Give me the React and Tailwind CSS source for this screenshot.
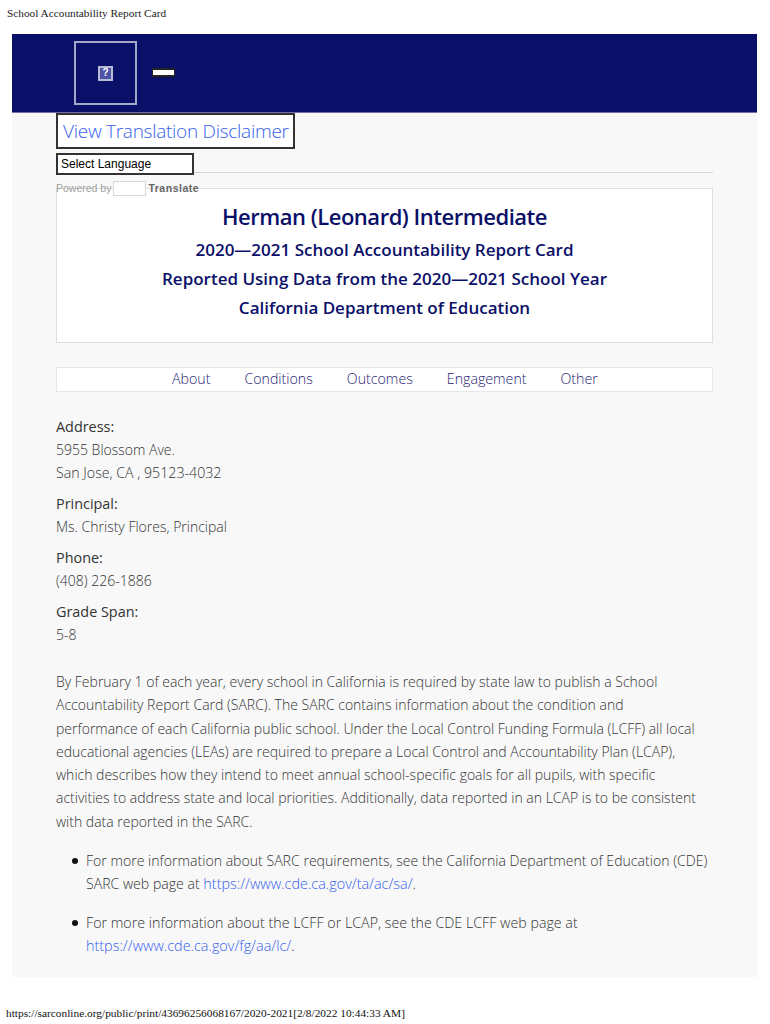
import React from 'react';

const OPEN = "font-['Open_Sans',sans-serif]";

export default function App() {
  return (
    <div className="w-[770px] h-[1024px] bg-white overflow-hidden flex flex-col">
      {/* print header */}
      <div className="h-[34px] pl-[7px] pt-[5px] font-['Liberation_Serif',serif] text-[11.3px] leading-[16px] text-[#222]">
        School Accountability Report Card
      </div>

      <div className={`ml-[12px] w-[745px] h-[943px] bg-[#f8f8f9] ${OPEN} font-light text-[#333]`}>
        {/* navy banner */}
        <div className="h-[79px] bg-[#0a0f68] border-b border-[#6f72a8] pl-[62px] pt-[7px] flex items-start">
          <div className="w-[63px] h-[64px] border-2 border-[#a5a7c6] flex items-center justify-center">
            <div className="w-[15px] h-[15px] bg-[#4d54a8] border-2 border-[#b9bbd6] flex items-center justify-center font-['Liberation_Sans',sans-serif] font-bold text-[10px] leading-none text-white">
              ?
            </div>
          </div>
          <div className="ml-[15px] mt-[27px] w-[23px] h-[9px] bg-white border-x border-y-2 border-[#222]" />
        </div>

        <div className="pl-[44px] pr-[44px]">
          <div className="w-[239px] h-[36px] bg-white border-2 border-[#333] flex items-center pl-[5px] text-[19px] tracking-[-0.27px] leading-none text-[#3560ee] whitespace-nowrap">
            View Translation Disclaimer
          </div>

          <div className="relative z-10 mt-[4px] w-[138px] h-[22px] bg-white border-2 border-[#333] flex items-center pl-[3px] font-['Liberation_Sans',sans-serif] font-normal text-[12px] text-black">
            Select Language
          </div>

          {/* powered by line over the title card */}
          <div className="h-[1px] -mt-[3px] bg-[#d6d6d8]" />
          <div className="relative z-10 mt-[6px] h-[19px] flex items-center font-['Liberation_Sans',sans-serif] font-normal text-[10.5px]">
            <span className="text-[#a0a0a0]">Powered by</span>
            <span className="ml-[2px] w-[33px] h-[15px] bg-white border border-[#d8d8d8]" />
            <span className="ml-[2px] font-bold text-[#666] tracking-[0.5px]">Translate</span>
          </div>

          {/* title card */}
          <div className="-mt-[10px] h-[155px] pt-[1px] bg-white border border-[#dedee2] text-center text-[#0a0f68] font-semibold">
            <h1 className="mt-[11px] text-[22px] tracking-[-0.48px] leading-[30px] font-semibold">Herman (Leonard) Intermediate</h1>
            <div className="mt-[4px] text-[17px] leading-[29px]">2020—2021 School Accountability Report Card</div>
            <div className="text-[17px] leading-[29px]">Reported Using Data from the 2020—2021 School Year</div>
            <div className="text-[17px] leading-[29px]">California Department of Education</div>
          </div>

          {/* section nav */}
          <div className="mt-[24px] h-[25px] pb-[1px] bg-white border border-[#e6e6ea] flex items-center pl-[115px] gap-[34px] text-[14.2px] text-[#1f2474]">
            <span>About</span>
            <span>Conditions</span>
            <span>Outcomes</span>
            <span>Engagement</span>
            <span>Other</span>
          </div>

          {/* school details */}
          <div className="mt-[23px] text-[14px] leading-[23px]">
            <div className="font-normal text-[14.4px]">Address:</div>
            <div>5955 Blossom Ave.</div>
            <div className="text-[14.2px]">San Jose, CA , 95123-4032</div>
            <div className="mt-[8px] font-normal text-[14.4px]">Principal:</div>
            <div>Ms. Christy Flores, Principal</div>
            <div className="mt-[8px] font-normal text-[14.4px]">Phone:</div>
            <div>(408) 226-1886</div>
            <div className="mt-[8px] font-normal text-[14.4px]">Grade Span:</div>
            <div>5-8</div>
          </div>

          <p className="mt-[24px] pr-[6px] text-[14px] leading-[23.3px]">
            By February 1 of each year, every school in California is required by state law to publish a School Accountability Report Card (SARC). The SARC contains information about the condition and performance of each California public school. Under the Local Control Funding Formula (LCFF) all local educational agencies (LEAs) are required to prepare a Local Control and Accountability Plan (LCAP), which describes how they intend to meet annual school-specific goals for all pupils, with specific activities to address state and local priorities. Additionally, data reported in an LCAP is to be consistent with data reported in the SARC.
          </p>

          <ul className="mt-[16px] text-[14.1px] leading-[23.3px]">
            <li className="flex">
              <span className="ml-[16px] mr-[8px] mt-[9px] w-[6px] h-[6px] shrink-0 rounded-full bg-[#111]" />
              <div>
                For more information about SARC requirements, see the California Department of Education (CDE) SARC web page at <a className="text-[14.4px] text-[#3560ee]">https://www.cde.ca.gov/ta/ac/sa/</a>.
              </div>
            </li>
            <li className="flex mt-[15px]">
              <span className="ml-[16px] mr-[8px] mt-[9px] w-[6px] h-[6px] shrink-0 rounded-full bg-[#111]" />
              <div className="text-[14.25px]">
                For more information about the LCFF or LCAP, see the CDE LCFF web page at <a className="text-[14.4px] text-[#3560ee]">https://www.cde.ca.gov/fg/aa/lc/</a>.
              </div>
            </li>
          </ul>
        </div>
      </div>

      {/* print footer */}
      <div className="mt-[28px] pl-[6px] font-['Liberation_Serif',serif] text-[11.37px] leading-[16px] text-[#111] whitespace-nowrap">
        https://sarconline.org/public/print/43696256068167/2020-2021[2/8/2022 10:44:33 AM]
      </div>
    </div>
  );
}
